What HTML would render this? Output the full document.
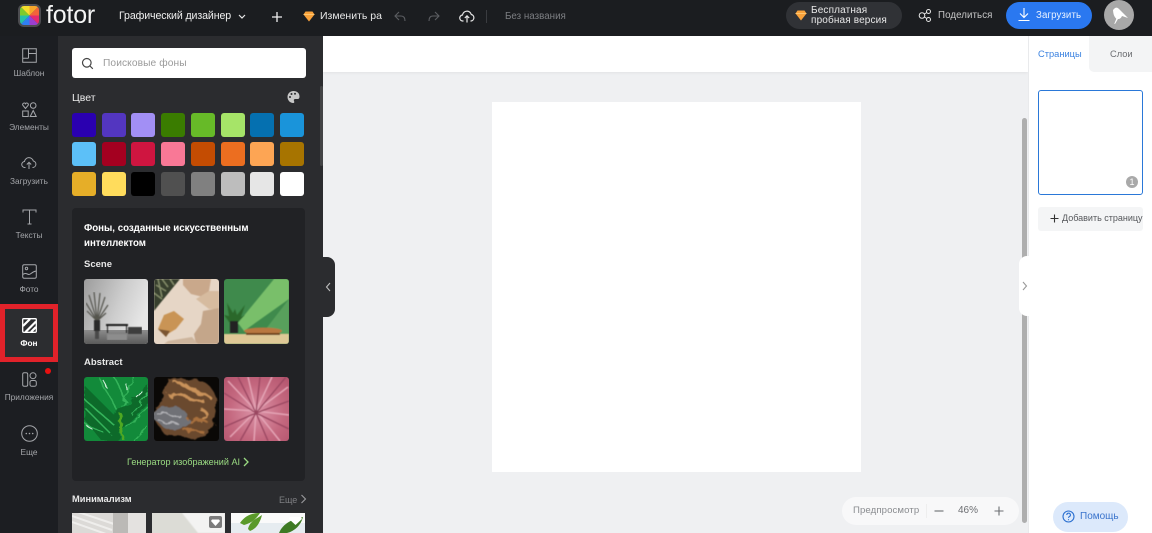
<!DOCTYPE html>
<html><head><meta charset="utf-8">
<style>
*{box-sizing:border-box}
html,body{margin:0;padding:0;width:1152px;height:533px;overflow:hidden;background:#eff0f2;font-family:"Liberation Sans","Noto Sans CJK SC",sans-serif}
.a{position:absolute}
.t{position:absolute;white-space:nowrap;line-height:1}
.sw{position:absolute;width:24px;height:24px;border-radius:3px}
.nl{position:absolute;left:0;width:58px;text-align:center;font-size:8.3px;color:#a5a7ab;line-height:1;white-space:nowrap}
svg{position:absolute;overflow:hidden}
</style></head><body>

<svg width="0" height="0" style="left:0;top:0">
<defs>
<filter id="soft" x="0" y="0" width="100%" height="100%"><feGaussianBlur stdDeviation=".6"/></filter>
<filter id="wavy" x="-10%" y="-10%" width="120%" height="120%"><feTurbulence type="fractalNoise" baseFrequency=".09" numOctaves="3" seed="4"/><feDisplacementMap in="SourceGraphic" scale="10"/><feGaussianBlur stdDeviation=".5"/></filter>
<filter id="leaf" x="-10%" y="-10%" width="120%" height="120%"><feTurbulence type="fractalNoise" baseFrequency=".05 .12" numOctaves="3" seed="9"/><feDisplacementMap in="SourceGraphic" scale="8"/><feGaussianBlur stdDeviation=".35"/></filter>
</defs>
</svg>

<!-- canvas area -->
<div class="a" style="left:323px;top:36px;width:705px;height:36px;background:#fff;box-shadow:0 1px 3px rgba(0,0,0,.06)"></div>
<div class="a" style="left:492px;top:102px;width:369px;height:370px;background:#fff"></div>
<div class="a" style="left:1022px;top:118px;width:5px;height:405px;background:#aeaeae;border-radius:3px"></div>

<!-- top bar -->
<div class="a" style="left:0;top:0;width:1152px;height:36px;background:#1b1d20"></div>
<svg style="left:18px;top:4px" width="23" height="23" viewBox="0 0 23 23">
<defs><clipPath id="lg"><rect x="2" y="2" width="19" height="19" rx="4"/></clipPath></defs>
<rect width="23" height="23" rx="6" fill="#4c4c50"/>
<g clip-path="url(#lg)">
<path d="M11.500 11.500L11.500 0 23 0Z" fill="#f7a62b"/><path d="M11.500 11.500L23 0 23 11.500Z" fill="#f2643a"/>
<path d="M11.500 11.500L23 11.500 23 23Z" fill="#e52a6f"/><path d="M11.500 11.500L23 23 11.500 23Z" fill="#9a3fd0"/>
<path d="M11.500 11.500L11.500 23 0 23Z" fill="#2f7ff2"/><path d="M11.500 11.500L0 23 0 11.500Z" fill="#24c0a8"/>
<path d="M11.500 11.500L0 11.500 0 0Z" fill="#7ccb2c"/><path d="M11.500 11.500L0 0 11.500 0Z" fill="#f5de2c"/>
</g></svg>
<div class="t" style="left:46px;top:2.500px;font-size:25px;color:#f4f4f4;letter-spacing:-.2px;line-height:25px">fotor</div>
<div class="t" style="left:119px;top:11px;font-size:10.600px;color:#f0f0f0;letter-spacing:-.1px">Графический дизайнер</div>
<svg style="left:237px;top:13px" width="10" height="8" viewBox="0 0 10 8"><path d="M2 2l3 3 3-3" fill="none" stroke="#e8e8e8" stroke-width="1.200"/></svg>
<svg style="left:270px;top:10px" width="14" height="14" viewBox="0 0 14 14"><path d="M7 2v10M2 7h10" stroke="#f0f0f0" stroke-width="1.300" fill="none"/></svg>
<svg style="left:303px;top:11px" width="12" height="11" viewBox="0 0 12 11"><path d="M2.500 0.500h7l2 3-5.500 7-5.500-7z" fill="#f9a23b"/><path d="M0.500 3.500h11" stroke="#ffc66e" stroke-width="1"/></svg>
<div class="t" style="left:320px;top:11px;font-size:10.500px;color:#e8e8e8">Изменить ра</div>
<svg style="left:393px;top:10px" width="15" height="14" viewBox="0 0 15 14"><path d="M6 2L2 6l4 4M2 6h6c3 0 4 2 4 5" fill="none" stroke="#5c5e62" stroke-width="1.100"/></svg>
<svg style="left:426px;top:10px" width="15" height="14" viewBox="0 0 15 14"><path d="M9 2l4 4-4 4M13 6H7c-3 0-4 2-4 5" fill="none" stroke="#5c5e62" stroke-width="1.100"/></svg>
<svg style="left:459px;top:9px" width="16" height="15" viewBox="0 0 16 15"><path d="M4.500 12H4A3 3 0 0 1 3.500 6 4.500 4.500 0 0 1 12.300 5.500 3.300 3.300 0 0 1 12 12h-.5M8 13.500V7M5.800 9L8 6.800 10.200 9" fill="none" stroke="#e8e8e8" stroke-width="1.200"/></svg>
<div class="a" style="left:486px;top:10px;width:1px;height:13px;background:#3a3c40"></div>
<div class="t" style="left:505px;top:11.500px;font-size:9.800px;color:#7c7e82">Без названия</div>

<div class="a" style="left:786px;top:2px;width:116px;height:27px;background:#303236;border-radius:14px"></div>
<svg style="left:795px;top:10px" width="12" height="11" viewBox="0 0 12 11"><path d="M2.500 0.500h7l2 3-5.500 7-5.500-7z" fill="#f9a23b"/><path d="M0.500 3.500h11" stroke="#ffc66e" stroke-width="1"/></svg>
<div class="t" style="left:811px;top:6px;font-size:10px;color:#e8e8e8;line-height:10px;letter-spacing:.15px">Бесплатная<br>пробная версия</div>
<svg style="left:918px;top:8px" width="14" height="15" viewBox="0 0 14 15"><circle cx="4" cy="7.500" r="2.800" fill="none" stroke="#e8e8e8" stroke-width="1"/><circle cx="10.500" cy="3.500" r="2" fill="none" stroke="#e8e8e8" stroke-width="1"/><circle cx="10.500" cy="11.500" r="2" fill="none" stroke="#e8e8e8" stroke-width="1"/><path d="M6.400 6l2.400-1.500M6.400 9l2.400 1.500" stroke="#e8e8e8" stroke-width="1"/></svg>
<div class="t" style="left:938px;top:11px;font-size:9.700px;color:#c8c8c8;letter-spacing:.1px">Поделиться</div>
<div class="a" style="left:1006px;top:2px;width:86px;height:27px;background:#2a78f0;border-radius:14px"></div>
<svg style="left:1017px;top:7px" width="14" height="15" viewBox="0 0 14 15"><path d="M7 1v9M3 6.500L7 10.500l4-4M1.500 13.500h11" fill="none" stroke="#fff" stroke-width="1.100"/></svg>
<div class="t" style="left:1036px;top:11px;font-size:9.700px;color:#eaf2ff;letter-spacing:.1px">Загрузить</div>
<svg style="left:1104px;top:0" width="30" height="30" viewBox="0 0 30 30"><circle cx="15" cy="15" r="15" fill="#a8a8a8"/><path d="M9 10l2-2c2-1 3 0 4 1l9 9-6-2c-1 2-2 3-4 3l-3 5-.7-.3 2-5c-3-3-3-6-3.300-8.700z" fill="#fff"/></svg>

<!-- left nav -->
<div class="a" style="left:0;top:36px;width:58px;height:497px;background:#1c1e22"></div>
<div class="a" style="left:0;top:304px;width:58px;height:58px;background:#2c2d30;border:5px solid #e1222a"></div>

<svg style="left:22px;top:48px" width="15" height="15" viewBox="0 0 15 15"><path d="M.7.7h13.600v13.600H.7zM6.500.7v9.500M.7 10.200h5.800M6.500 5.500h7.800" fill="none" stroke="#a5a7ab" stroke-width="1"/></svg>
<div class="nl" style="top:69px">Шаблон</div>
<svg style="left:22px;top:102px" width="15" height="15" viewBox="0 0 15 15" fill="none" stroke="#a5a7ab" stroke-width="1"><path d="M3.500 6.500L.8 3.200C0 1.500 2.600 0 3.500 1.800 4.400 0 7 1.500 6.200 3.200z"/><circle cx="11.200" cy="3.500" r="2.800"/><rect x=".7" y="9" width="5.500" height="5.500"/><path d="M11.200 8.500l3 6h-6z"/></svg>
<div class="nl" style="top:123px">Элементы</div>
<svg style="left:21px;top:156px" width="16" height="14" viewBox="0 0 16 14" fill="none" stroke="#a5a7ab" stroke-width="1"><path d="M4.500 11.500H4A3 3 0 0 1 3.500 5.500 4.500 4.500 0 0 1 12.300 5 3.300 3.300 0 0 1 12 11.500h-.5M8 13V6.500M5.800 8.500L8 6.300 10.200 8.500"/></svg>
<div class="nl" style="top:177px">Загрузить</div>
<svg style="left:22px;top:209px" width="15" height="16" viewBox="0 0 15 16" fill="none" stroke="#a5a7ab" stroke-width="1"><path d="M1 3.500V1h13v2.500M7.500 1v14M5.500 15h4"/></svg>
<div class="nl" style="top:231px">Тексты</div>
<svg style="left:22px;top:264px" width="15" height="15" viewBox="0 0 15 15" fill="none" stroke="#a5a7ab" stroke-width="1"><rect x=".7" y=".7" width="13.600" height="13.600" rx="1.500"/><circle cx="4.500" cy="4.500" r="1.200"/><path d="M.7 10.500c3-2 4-.5 6 0s3-3 7.600-3.500"/></svg>
<div class="nl" style="top:285px">Фото</div>
<svg style="left:22px;top:318px" width="15" height="15" viewBox="0 0 15 15"><rect x=".7" y=".7" width="13.600" height="13.600" rx="1" fill="none" stroke="#fff" stroke-width="1.300"/><path d="M1 8L8 1M3.500 14L14 3.500M9 14l5-5" stroke="#fff" stroke-width="2.200"/></svg>
<div class="nl" style="top:339px;color:#fff;font-weight:bold">Фон</div>
<svg style="left:22px;top:372px" width="15" height="15" viewBox="0 0 15 15" fill="none" stroke="#a5a7ab" stroke-width="1"><rect x=".7" y=".7" width="5" height="13.600" rx="1.500"/><circle cx="11" cy="3.700" r="3"/><rect x="8" y="8.500" width="6.300" height="5.800" rx="1.800"/></svg>
<div class="a" style="left:45px;top:368px;width:6px;height:6px;border-radius:50%;background:#e81010"></div>
<div class="nl" style="top:393px">Приложения</div>
<svg style="left:21px;top:425px" width="17" height="17" viewBox="0 0 17 17" fill="none"><circle cx="8.500" cy="8.500" r="7.800" stroke="#a5a7ab" stroke-width="1"/><g fill="#a5a7ab"><circle cx="5.300" cy="8.500" r=".8"/><circle cx="8.500" cy="8.500" r=".8"/><circle cx="11.700" cy="8.500" r=".8"/></g></svg>
<div class="nl" style="top:448px">Еще</div>

<!-- side panel -->
<div class="a" style="left:58px;top:36px;width:265px;height:497px;background:#2b2c2f"></div>
<div class="a" style="left:320px;top:86px;width:3px;height:80px;background:#434446;border-radius:2px"></div>
<div class="a" style="left:72px;top:48px;width:234px;height:30px;background:#fff;border-radius:3px"></div>
<svg style="left:81px;top:57px" width="13" height="13" viewBox="0 0 13 13" fill="none" stroke="#444" stroke-width="1.200"><circle cx="5.800" cy="5.800" r="4.300"/><path d="M9 9l2.800 2.800"/></svg>
<div class="t" style="left:103px;top:59px;font-size:10.200px;color:#9a9a9a;letter-spacing:.1px">Поисковые фоны</div>
<div class="t" style="left:72px;top:92.500px;font-size:10.500px;color:#ececec">Цвет</div>
<svg style="left:287px;top:91px" width="13" height="12" viewBox="0 0 13 12"><path d="M6.500 0C3 0 .5 2.500.5 6s2.800 6 5.500 6c1.500 0 1.500-1 1-2s0-2 1.500-2h2c1.500 0 2-1 2-2.500C12.500 2 10 0 6.500 0z" fill="#c8c8c8"/><g fill="#2b2c2f"><circle cx="3" cy="6" r="1"/><circle cx="4.500" cy="3" r="1"/><circle cx="8" cy="2.800" r="1"/></g></svg>

<div class="sw" style="left:72px;top:113px;background:#2a00b0"></div>
<div class="sw" style="left:102px;top:113px;background:#5336c0"></div>
<div class="sw" style="left:131px;top:113px;background:#a28ff5"></div>
<div class="sw" style="left:161px;top:113px;background:#3a7c00"></div>
<div class="sw" style="left:191px;top:113px;background:#67ba28"></div>
<div class="sw" style="left:221px;top:113px;background:#a6e468"></div>
<div class="sw" style="left:250px;top:113px;background:#0570b0"></div>
<div class="sw" style="left:280px;top:113px;background:#1a94da"></div>

<div class="sw" style="left:72px;top:142px;background:#5cc0f8"></div>
<div class="sw" style="left:102px;top:142px;background:#a40020"></div>
<div class="sw" style="left:131px;top:142px;background:#cf1540"></div>
<div class="sw" style="left:161px;top:142px;background:#f97896"></div>
<div class="sw" style="left:191px;top:142px;background:#c44c02"></div>
<div class="sw" style="left:221px;top:142px;background:#ec6e20"></div>
<div class="sw" style="left:250px;top:142px;background:#fda554"></div>
<div class="sw" style="left:280px;top:142px;background:#a77400"></div>

<div class="sw" style="left:72px;top:172px;background:#e6ae28"></div>
<div class="sw" style="left:102px;top:172px;background:#ffdc5c"></div>
<div class="sw" style="left:131px;top:172px;background:#000"></div>
<div class="sw" style="left:161px;top:172px;background:#505050"></div>
<div class="sw" style="left:191px;top:172px;background:#808080"></div>
<div class="sw" style="left:221px;top:172px;background:#bdbdbd"></div>
<div class="sw" style="left:250px;top:172px;background:#e6e6e6"></div>
<div class="sw" style="left:280px;top:172px;background:#fff"></div>

<div class="a" style="left:72px;top:208px;width:233px;height:273px;background:#212225;border-radius:4px"></div>
<div class="t" style="left:84px;top:222px;font-size:9.700px;color:#fff;font-weight:bold;line-height:14.500px">Фоны, созданные искусственным<br>интеллектом</div>
<div class="t" style="left:84px;top:260px;font-size:9.500px;color:#e8e8e8;font-weight:bold">Scene</div>

<!-- scene thumbnails -->
<svg style="left:84px;top:279px;border-radius:3px" width="64" height="65" viewBox="0 0 64 65">
<defs><linearGradient id="g1" x1="0" y1="0" x2="1" y2=".4"><stop offset="0" stop-color="#9c9c9c"/><stop offset=".6" stop-color="#cdcdcd"/><stop offset="1" stop-color="#e6e6e6"/></linearGradient>
<linearGradient id="g2" x1="0" y1="0" x2="0" y2="1"><stop offset="0" stop-color="#8c8c8c"/><stop offset="1" stop-color="#5a5a5a"/></linearGradient></defs>
<rect width="64" height="65" fill="url(#g1)"/><rect y="51" width="64" height="14" fill="url(#g2)"/>
<g filter="url(#soft)">
<g stroke="#54544e" stroke-width="1.200" fill="none"><path d="M13 42L5 16M13 42L10 13M13 42L16 14M13 42L21 18M13 42L2 24M13 42L24 26M13 42L3 32M13 42L22 34"/></g>
<rect x="10" y="41" width="6" height="11" fill="#2c2c2c"/><rect x="11" y="52" width="4" height="8" fill="#4a4a4a"/>
<rect x="22" y="45" width="22" height="2" fill="#1f1f1f"/><rect x="23" y="47" width="1" height="7" fill="#222"/><rect x="42" y="47" width="1" height="7" fill="#222"/>
<rect x="44" y="48" width="14" height="7" fill="#3c3c3c"/><rect x="23" y="55" width="20" height="6" fill="#8d8d8d"/>
</g>
</svg>
<svg style="left:154px;top:279px;border-radius:3px" width="65" height="65" viewBox="0 0 65 65">
<rect width="65" height="65" fill="#e6d6c6"/>
<g filter="url(#soft)">
<path d="M29 0h28l-2 12-6 6-12-3-8-9z" fill="#c9a88b"/><path d="M42 20l13-8 10 0v18l-10 0z" fill="#d6bb9f"/>
<path d="M49 32l16-3v36H42l-2-10 7-10z" fill="#c4a68a"/><path d="M4 50l6-14 10-4 10 8-8 10-10 6z" fill="#c99455"/><path d="M4 50l12 2-4 6z" fill="#7a5430"/>
<path d="M14 62l24-4 6 7H10z" fill="#cdb59d"/>
<path d="M0 0h26L8 22 0 32z" fill="#39412f"/><path d="M2 6l10 6M0 14l8 6M8 0l6 8M16 0l4 6M4 0l4 18" stroke="#87906c" stroke-width="1.300"/>
</g>
</svg>
<svg style="left:224px;top:279px;border-radius:3px" width="65" height="65" viewBox="0 0 65 65">
<rect width="65" height="65" fill="#3f8a4c"/>
<g filter="url(#soft)">
<path d="M50 0h15v20L20 52l-6-8z" fill="#79bf6a"/><path d="M65 20v35H38z" fill="#58a05c"/>
<rect y="55" width="65" height="10" fill="#dfc896"/>
<path d="M3 24l6 10 2-4 2 6 8-10-4 12 4-2-8 8H6l-6-8 5 1z" fill="#2a682c"/><rect x="6" y="42" width="8" height="12" fill="#242424"/>
<ellipse cx="39" cy="52" rx="19" ry="3.500" fill="#b9773f"/><rect x="22" y="54" width="34" height="2" fill="#6e421e"/>
</g>
</svg>

<div class="t" style="left:84px;top:358px;font-size:9.500px;color:#e8e8e8;font-weight:bold">Abstract</div>
<!-- abstract thumbnails -->
<svg style="left:84px;top:377px;border-radius:3px" width="64" height="64" viewBox="0 0 64 64">
<rect width="64" height="64" fill="#128a3a"/>
<g filter="url(#leaf)">
<path d="M0 8l30 30 34-30v18L36 54l-4 10H18L0 42z" fill="#0b6a2b"/>
<path d="M14 0l20 34M30 0l12 24M50 0L38 30M0 22l30 26M0 46l20 10M64 30L42 50M50 64l14-14M2 32l24 24M64 16L46 36" stroke="#35b35a" stroke-width="1.500" fill="none"/>
<path d="M18 2l6 10M42 6l2 8M58 14l-6 6M2 48l6 4" stroke="#d0efd8" stroke-width="1.200" fill="none"/>
<path d="M36 36l2 26" stroke="#4fa820" stroke-width="3" fill="none"/>
</g>
</svg>
<svg style="left:154px;top:377px;border-radius:3px" width="65" height="64" viewBox="0 0 65 64">
<rect width="65" height="64" fill="#0a0806"/>
<g filter="url(#wavy)">
<path d="M14 2c8-2 14 2 22 0s16 2 22 10 6 10 4 18-2 16-8 26-16 6-22 4-18 4-24-6-10-16-6-24 12-8 6-14z" fill="#6a4a2e"/>
<path d="M20 6c12 0 16 10 30 12M14 18c14-4 20 6 38 8M46 32c8 2 10 8 2 14M32 8c6 6 14 6 24 12" stroke="#c9925a" stroke-width="2.500" fill="none"/>
<path d="M1 34c6-8 16-6 26-2s10 16 0 20-16 0-20-4-10-4-6-14z" fill="#707176"/>
<path d="M4 38c8-4 14 2 22 0M6 45c6 2 12-2 18 2" stroke="#b4b4b8" stroke-width="1.500" fill="none"/>
<path d="M34 44c6-4 12 0 20 2M30 54c4-2 14-2 20 2" stroke="#a8703c" stroke-width="2.500" fill="none"/>
</g>
</svg>
<svg style="left:224px;top:377px;border-radius:3px" width="65" height="64" viewBox="0 0 65 64">
<defs><radialGradient id="pk" cx=".5" cy=".55" r=".7"><stop offset="0" stop-color="#dc94a8"/><stop offset=".6" stop-color="#c4687f"/><stop offset="1" stop-color="#b5566f"/></radialGradient></defs>
<rect width="65" height="64" fill="url(#pk)"/>
<g filter="url(#soft)">
<g stroke="#e4a4b5" stroke-width="1.500"><path d="M32 34L4 4M32 34L24 0M32 34L48 0M32 34L64 10M32 34L65 38M32 34L56 64M32 34L30 64M32 34L6 60M32 34L0 32"/></g>
<g stroke="#9a4661" stroke-width="1.300"><path d="M32 36L14 0M32 36L36 0M32 36L62 0M32 36L65 24M32 36L65 52M32 36L44 64M32 36L16 64M32 36L0 50M32 36L0 16"/></g>
</g>
</svg>

<div class="t" style="left:127px;top:458px;font-size:9.100px;color:#9adb82">Генератор изображений AI</div>
<svg style="left:242px;top:457px" width="8" height="10" viewBox="0 0 8 10"><path d="M2 1l4 4-4 4" fill="none" stroke="#9adb82" stroke-width="1.300"/></svg>

<div class="t" style="left:72px;top:494.500px;font-size:9.300px;color:#e8e8e8;font-weight:bold">Минимализм</div>
<div class="t" style="left:279px;top:495.500px;font-size:9px;color:#7e7f82">Еще</div>
<svg style="left:300px;top:494px" width="7" height="10" viewBox="0 0 7 10"><path d="M1.500 1l4 4-4 4" fill="none" stroke="#9a9b9e" stroke-width="1.100"/></svg>

<svg style="left:72px;top:513px" width="74" height="20" viewBox="0 0 74 20"><rect width="74" height="20" fill="#dcdad7"/><path d="M0 3l40 14M0 9l34 12M0-3l42 14" stroke="#efeeec" stroke-width="2"/><rect x="41" width="15" height="20" fill="#bbb9b6"/><rect x="56" width="18" height="20" fill="#e4e2e0"/></svg>
<svg style="left:152px;top:513px" width="73" height="20" viewBox="0 0 73 20"><rect width="73" height="20" fill="#dcdcd6"/><path d="M30 0h43v20H46z" fill="#f3f3f2" filter="url(#soft)"/><rect x="57" y="3" width="13" height="12" rx="2" fill="#7c7c7c"/><path d="M60 6.500h7l1 1.500-4.500 5L59 8z" fill="#fff"/></svg>
<svg style="left:231px;top:513px" width="74" height="20" viewBox="0 0 74 20"><rect width="74" height="20" fill="#fafafa"/><rect y="10" width="74" height="10" fill="#e6ecf0"/><path d="M9 10c4-6 10-10 20-10-4 6-8 10-16 12zM17 16c2-8 8-10 14-14-2 8-6 14-12 16z" fill="#5a9a2a"/><path d="M48 20c4-10 14-14 24-16-2 8-8 14-16 16z" fill="#3e7a24"/><path d="M59 4h11l1 2-6.500 6-6.500-6z" fill="#fff"/></svg>

<!-- collapse handle -->
<div class="a" style="left:323px;top:257px;width:12px;height:60px;background:#2b2c2f;border-radius:0 8px 8px 0"></div>
<svg style="left:325px;top:282px" width="7" height="10" viewBox="0 0 7 10"><path d="M5 1L1.500 5 5 9" fill="none" stroke="#bdbdbd" stroke-width="1.100"/></svg>

<!-- right panel -->
<div class="a" style="left:1028px;top:36px;width:124px;height:497px;background:#fff;border-left:1px solid #e9eaec"></div>
<div class="a" style="left:1089px;top:36px;width:63px;height:36px;background:#f3f4f5;border-bottom-left-radius:5px"></div>
<div class="t" style="left:1038px;top:50px;font-size:9.300px;color:#3b82e0">Страницы</div>
<div class="t" style="left:1110px;top:50px;font-size:9.300px;color:#6c6e72">Слои</div>
<div class="a" style="left:1038px;top:90px;width:105px;height:105px;background:#fff;border:1.500px solid #2a78d8;border-radius:3px"></div>
<div class="a" style="left:1126px;top:176px;width:12px;height:12px;border-radius:50%;background:#a9a9a9;color:#fff;font-size:9px;line-height:12px;text-align:center">1</div>
<div class="a" style="left:1038px;top:207px;width:105px;height:24px;background:#f4f5f6;border-radius:3px"></div>
<svg style="left:1050px;top:214px" width="9" height="9" viewBox="0 0 9 9"><path d="M4.500 .5v8M.5 4.500h8" stroke="#333" stroke-width="1.100" fill="none"/></svg>
<div class="t" style="left:1062px;top:214px;font-size:9px;color:#55575b">Добавить страницу</div>

<div class="a" style="left:1019px;top:256px;width:12px;height:60px;background:#fff;border-radius:8px 0 0 8px"></div>
<svg style="left:1021px;top:281px" width="7" height="10" viewBox="0 0 7 10"><path d="M2 1l3.500 4L2 9" fill="none" stroke="#999" stroke-width="1.100"/></svg>

<!-- preview -->
<div class="a" style="left:842px;top:497px;width:177px;height:28px;background:#f8f8f9;border-radius:14px"></div>
<div class="t" style="left:853px;top:506px;font-size:9.600px;color:#8a8c90;letter-spacing:.1px">Предпросмотр</div>
<div class="a" style="left:926px;top:504px;width:1px;height:14px;background:#eeeeee"></div>
<svg style="left:934px;top:506px" width="10" height="10" viewBox="0 0 10 10"><path d="M.5 5h9" stroke="#6c6e72" stroke-width="1.100"/></svg>
<div class="t" style="left:958px;top:506px;font-size:10px;color:#6c6e72">46%</div>
<svg style="left:994px;top:506px" width="10" height="10" viewBox="0 0 10 10"><path d="M.5 5h9M5 .5v9" stroke="#6c6e72" stroke-width="1.100"/></svg>

<div class="a" style="left:1053px;top:502px;width:75px;height:30px;background:#dce9fb;border-radius:15px"></div>
<svg style="left:1062px;top:510px" width="13" height="13" viewBox="0 0 13 13" fill="none" stroke="#2a6fd0" stroke-width="1.100"><circle cx="6.500" cy="6.500" r="5.500"/><path d="M4.800 5a1.800 1.800 0 1 1 2.500 1.600c-.6.300-.8.600-.8 1.300"/><path d="M6.500 9.200v1"/></svg>
<div class="t" style="left:1080px;top:512px;font-size:10px;color:#3a74cc">Помощь</div>
</body></html>
